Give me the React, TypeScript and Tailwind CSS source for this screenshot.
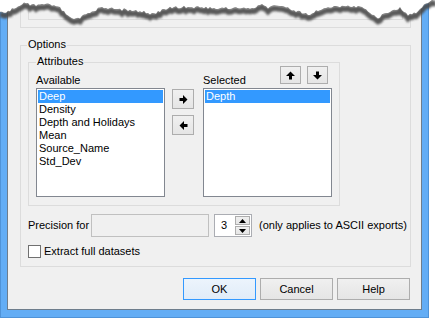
import React from "react";

const anchors: [number, number][] = [
  [0, 13], [5, 13], [10, 10], [20, 5], [25, 3], [33, 5], [43, 4], [53, 5], [60, 8], [66, 14],
  [73, 20], [80, 18], [88, 13], [100, 8], [115, 9], [130, 10], [145, 12], [152, 14], [160, 11],
  [173, 7], [195, 7], [220, 8], [250, 8], [258, 6], [263, 3], [267, 9], [273, 5], [285, 7],
  [300, 12], [310, 15], [318, 10], [327, 7], [345, 6], [363, 7], [370, 12], [377, 18], [387, 13],
  [400, 8], [407, 15], [417, 12], [423, 7], [427, 2], [432, 0], [436, 0],
];

function edgePoints(): [number, number][] {
  const pts: [number, number][] = [];
  for (let x = 0; x <= 436; x += 2) {
    let i = 0;
    while (i < anchors.length - 2 && anchors[i + 1][0] < x) i++;
    const [x0, y0] = anchors[i];
    const [x1, y1] = anchors[i + 1];
    const t = x1 === x0 ? 0 : Math.min(1, Math.max(0, (x - x0) / (x1 - x0)));
    let y = y0 + (y1 - y0) * t;
    const r = Math.sin(x * 12.9898) * 43758.5453;
    const j = (r - Math.floor(r)) * 2 - 1;
    y += j * 1.3;
    pts.push([x, Math.max(0, y)]);
  }
  return pts;
}

function TornEdge() {
  const pts = edgePoints();
  const line = pts.map(([x, y]) => `${x},${y.toFixed(1)}`).join(" ");
  const shadow = pts.map(([x, y]) => `${x},${(y + 3).toFixed(1)}`).join(" ");
  const fill = `M0,0 L${pts.map(([x, y]) => `${x},${y.toFixed(1)}`).join(" L")} L436,0 Z`;
  return (
    <svg className="absolute left-0 top-0" width="436" height="32" viewBox="0 0 436 32">
      <defs>
        <filter id="blur" x="-5%" y="-50%" width="110%" height="200%">
          <feGaussianBlur stdDeviation="1" />
        </filter>
      </defs>
      <polyline points={shadow} fill="none" stroke="#4a4a4a" strokeWidth="5.5" filter="url(#blur)" opacity="0.9" />
      <polyline points={line} fill="none" stroke="#777" strokeWidth="1.2" />
      <path d={fill} fill="#fff" />
    </svg>
  );
}

function Arrow({ dir }: { dir: "right" | "left" | "up" | "down" }) {
  const rot = { right: 0, down: 90, left: 180, up: 270 }[dir];
  return (
    <svg width="9" height="9" viewBox="0 0 9 9" style={{ transform: `rotate(${rot}deg)` }}>
      <polygon points="0.5,3 4,3 4,0 8.5,4.5 4,9 4,6 0.5,6" fill="#000" />
    </svg>
  );
}

function Tri({ up }: { up: boolean }) {
  return (
    <svg width="7" height="4" viewBox="0 0 7 4">
      <polygon points={up ? "0,4 7,4 3.5,0" : "0,0 7,0 3.5,4"} fill="#000" />
    </svg>
  );
}

function ListBox({ items, sel }: { items: string[]; sel: number }) {
  return (
    <div className="w-[129px] h-[109px] bg-white border border-[#828790] p-[1px]">
      {items.map((t, i) => (
        <div
          key={t}
          className={
            i === sel
              ? "h-[13px] leading-[13px] pl-[1px] bg-[#3399ff] text-white whitespace-nowrap"
              : "h-[13px] leading-[13px] pl-[1px] whitespace-nowrap"
          }
        >
          {t}
        </div>
      ))}
    </div>
  );
}

function SmallBtn({ children, className }: { children: React.ReactNode; className: string }) {
  return (
    <div className={`border border-[#adadad] bg-gradient-to-b from-[#f0f0f0] to-[#e5e5e5] flex items-center justify-center ${className}`}>
      {children}
    </div>
  );
}

export default function App() {
  return (
    <div className="w-[435px] h-[319px] bg-white relative overflow-hidden text-[11px] text-black font-['Liberation_Sans',Arial,sans-serif]">
      <div className="w-[429px] h-[318px] bg-[#63adf5] border-x border-b border-[#4f93d8] px-[6px] pb-[7px] flex flex-col">
        <div className="flex-1 border-x border-b border-[#6e7d8c] bg-[#f0f0f0] flex flex-col">
          {/* previous group boxes (cut off) */}
          <div className="ml-[12px] w-[391px] h-[28px] border-x border-b border-[#dcdcdc]">
            <div className="ml-[7px] w-[375px] h-[20px] border-x border-b border-[#dcdcdc]" />
          </div>

          {/* Options group */}
          <div className="mt-[17px] ml-[12px] w-[391px] h-[222px] border border-[#dcdcdc] relative flex flex-col">
            <span className="absolute left-[6px] top-[-8px] px-[1px] leading-[13px] bg-[#f0f0f0]">Options</span>

            {/* Attributes group */}
            <div className="mt-[16px] ml-[7px] w-[312px] h-[144px] border border-[#dcdcdc] relative">
              <span className="absolute left-[7px] top-[-8px] px-[1px] leading-[13px] bg-[#f0f0f0]">Attributes</span>
              <div className="flex pl-[7px] pt-[3px]">
                <div className="flex flex-col w-[129px]">
                  <div className="h-[22px] flex items-end">
                    <span className="leading-[13px] pb-[1px]">Available</span>
                  </div>
                  <ListBox
                    items={["Deep", "Density", "Depth and Holidays", "Mean", "Source_Name", "Std_Dev"]}
                    sel={0}
                  />
                </div>
                <div className="ml-[7px] pt-[23px] flex flex-col gap-[6px]">
                  <SmallBtn className="w-[22px] h-[20px]"><Arrow dir="right" /></SmallBtn>
                  <SmallBtn className="w-[22px] h-[20px]"><Arrow dir="left" /></SmallBtn>
                </div>
                <div className="ml-[9px] flex flex-col w-[129px]">
                  <div className="h-[22px] flex">
                    <span className="self-end leading-[13px] pb-[1px]">Selected</span>
                    <div className="ml-auto mr-[4px] flex gap-[6px] self-start">
                      <SmallBtn className="w-[21px] h-[18px]"><Arrow dir="up" /></SmallBtn>
                      <SmallBtn className="w-[21px] h-[18px]"><Arrow dir="down" /></SmallBtn>
                    </div>
                  </div>
                  <ListBox items={["Depth"]} sel={0} />
                </div>
              </div>
            </div>

            {/* Precision row */}
            <div className="mt-[8px] pl-[7px] flex items-center h-[23px]">
              <span className="w-[63px] whitespace-nowrap">Precision for</span>
              <div className="w-[118px] h-[23px] border border-[#c0c0c0] bg-[#f0f0f0]" />
              <div className="ml-[5px] w-[38px] h-[23px] border border-[#abadb3] bg-white flex">
                <span className="flex-1 pl-[6px] leading-[21px]">3</span>
                <div className="flex flex-col gap-[1px] py-[1px] pr-[1px]">
                  <SmallBtn className="w-[15px] h-[9px]"><Tri up /></SmallBtn>
                  <SmallBtn className="w-[15px] h-[9px]"><Tri up={false} /></SmallBtn>
                </div>
              </div>
              <span className="ml-[7px] whitespace-nowrap">(only applies to ASCII exports)</span>
            </div>

            {/* Checkbox */}
            <div className="mt-[8px] pl-[7px] flex items-center">
              <div className="w-[13px] h-[13px] border border-[#707070] bg-white" />
              <span className="ml-[3px] leading-[13px]">Extract full datasets</span>
            </div>
          </div>

          {/* Buttons */}
          <div className="mt-[11px] ml-[175px] flex gap-[4px]">
            <div className="w-[73px] h-[22px] border border-[#3399ff] bg-gradient-to-b from-[#ecf4fc] to-[#e1ecf8] flex items-center justify-center">OK</div>
            <div className="w-[73px] h-[22px] border border-[#adadad] bg-gradient-to-b from-[#f0f0f0] to-[#e5e5e5] flex items-center justify-center">Cancel</div>
            <div className="w-[73px] h-[22px] border border-[#adadad] bg-gradient-to-b from-[#f0f0f0] to-[#e5e5e5] flex items-center justify-center">Help</div>
          </div>
        </div>
      </div>
      <TornEdge />
    </div>
  );
}
